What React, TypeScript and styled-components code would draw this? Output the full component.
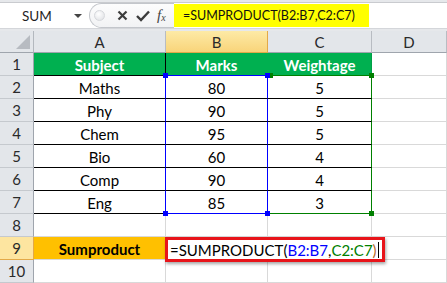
import React from 'react';
import styled, {createGlobalStyle} from 'styled-components';

const GlobalStyle = createGlobalStyle`
  html, body {
    margin: 0;
    padding: 0;
    background: #ffffff;
    overflow: hidden;
  }
  body {
    font-family: Lato, 'Liberation Sans', Arial, sans-serif;
  }
`;

const COLS = '34px 132px 102px 104px 75px';
const ROWS = '22px repeat(10, 23px)';

const BLUE = '#0000ff';
const GREEN = '#008000';

type Row = {subject: string; marks: string; weight: string};

const data: Row[] = [
  {subject: 'Maths', marks: '80', weight: '5'},
  {subject: 'Phy', marks: '90', weight: '5'},
  {subject: 'Chem', marks: '95', weight: '5'},
  {subject: 'Bio', marks: '60', weight: '4'},
  {subject: 'Comp', marks: '90', weight: '4'},
  {subject: 'Eng', marks: '85', weight: '3'},
];

const App = () => (
  <>
    <GlobalStyle />
    <Page>
      <FormulaBar>
        <Bar>
          <NameBox>
            <span>SUM</span>
            <Arrow />
          </NameBox>
          <Buttons>
            <Grip />
            <IconSlot>
              <svg width="11" height="11" viewBox="0 0 11 11">
                <path d="M1.5 1.5 L9.5 9.5 M9.5 1.5 L1.5 9.5" stroke="#3c3c3c" strokeWidth="2.2" />
              </svg>
            </IconSlot>
            <IconSlot>
              <svg width="14" height="12" viewBox="0 0 14 12">
                <path d="M1 6 L5 10 L13 1.5" stroke="#3c3c3c" strokeWidth="2.4" fill="none" />
              </svg>
            </IconSlot>
            <Fx>
              f<sub>x</sub>
            </Fx>
          </Buttons>
          <FormulaInput>=SUMPRODUCT(B2:B7,C2:C7)</FormulaInput>
        </Bar>
      </FormulaBar>

      <Sheet>
        <Grid>
          <Corner>
            <svg width="14" height="14" viewBox="0 0 14 14">
              <polygon points="14,0 14,14 0,14" fill="#b7bbc1" />
            </svg>
          </Corner>
          <ColHead>A</ColHead>
          <ColHead $selected>B</ColHead>
          <ColHead>C</ColHead>
          <ColHead>D</ColHead>

          <RowHead>1</RowHead>
          <Cell $bg="#00b050" $bold $color="#ffffff" $right="#000" $bottom="#000">
            Subject
          </Cell>
          <Cell $bg="#00b050" $bold $color="#ffffff" $right="#00b050" $bottom={BLUE}>
            Marks
          </Cell>
          <Cell $bg="#00b050" $bold $color="#ffffff" $right="#00a046" $bottom={GREEN}>
            Weightage
          </Cell>
          <Cell />

          {data.map((r, i) => {
            const last = i === data.length - 1;
            return (
              <React.Fragment key={r.subject}>
                <RowHead>{i + 2}</RowHead>
                <Cell $right={BLUE} $bottom="#000">
                  {r.subject}
                </Cell>
                <Cell $right={BLUE} $bottom={last ? BLUE : '#000'}>
                  {r.marks}
                </Cell>
                <Cell $right={GREEN} $bottom={last ? GREEN : '#000'}>
                  {r.weight}
                </Cell>
                <Cell />
              </React.Fragment>
            );
          })}

          <RowHead>8</RowHead>
          <Cell />
          <Cell />
          <Cell />
          <Cell />

          <RowHead $selected>9</RowHead>
          <Cell $bg="#ffc000" $bold $right="#ffc000">
            Sumproduct
          </Cell>
          <Cell />
          <Cell />
          <Cell />

          <RowHead>10</RowHead>
          <Cell />
          <Cell />
          <Cell />
          <Cell />
        </Grid>

        <Overlay>
          <RangeBox $col="4" $row="3 / 9">
            <Handle $color={GREEN} $x="left" $y="top" $shift={3} />
            <Handle $color={GREEN} $x="right" $y="top" />
            <Handle $color={GREEN} $x="right" $y="bottom" />
          </RangeBox>
          <RangeBox $col="3" $row="3 / 9">
            <Handle $color={BLUE} $x="left" $y="top" />
            <Handle $color={BLUE} $x="right" $y="top" />
            <Handle $color={BLUE} $x="left" $y="bottom" />
            <Handle $color={BLUE} $x="right" $y="bottom" />
          </RangeBox>
          <EditBox>
            =SUMPRODUCT(<Ref $color={BLUE}>B2:B7</Ref>,<Ref $color={GREEN}>C2:C7</Ref>
            <Ref $color="#b5651d">)</Ref>
            <Caret />
          </EditBox>
        </Overlay>
      </Sheet>
    </Page>
  </>
);

export default App;

const Page = styled.div`
  width: 447px;
  height: 283px;
  overflow: hidden;
  background: #ffffff;
`;

const FormulaBar = styled.div`
  height: 31px;
  box-sizing: border-box;
  padding-top: 2px;
  background: #e6e8eb;
`;

const Bar = styled.div`
  display: flex;
  align-items: center;
  height: 27px;
  box-sizing: border-box;
  border-top: 1px solid #c9cbcf;
  border-bottom: 1px solid #d4d6da;
  background: #ffffff;
`;

const NameBox = styled.div`
  display: flex;
  align-items: center;
  width: 89px;
  height: 100%;
  box-sizing: border-box;
  padding-left: 22px;
  font-size: 13.5px;
  color: #1f1f1f;

  span {
    flex: 1;
  }
`;

const Arrow = styled.i`
  width: 0;
  height: 0;
  margin-right: 7px;
  border-left: 4px solid transparent;
  border-right: 4px solid transparent;
  border-top: 4px solid #444;
`;

const Buttons = styled.div`
  display: flex;
  align-items: center;
  width: 85px;
  height: 100%;
  box-sizing: border-box;
  padding-left: 4px;
  border: 1px solid #c3c6cb;
  border-right: none;
  border-radius: 13px 0 0 13px;
  background: linear-gradient(#fdfdfd, #f1f2f4);
`;

const Grip = styled.span`
  width: 9px;
  height: 9px;
  margin-right: 8px;
  border-radius: 50%;
  border: 1px solid #d6d8dc;
  background: radial-gradient(circle at 40% 35%, #ffffff, #dcdee2);
`;

const IconSlot = styled.span`
  display: flex;
  align-items: center;
  justify-content: center;
  width: 19px;
  margin-right: 1px;
`;

const Fx = styled.span`
  margin-left: 4px;
  font-family: 'Liberation Serif', 'Times New Roman', serif;
  font-style: italic;
  font-size: 15px;
  color: #444;

  sub {
    font-size: 10px;
    vertical-align: -1px;
  }
`;

const FormulaInput = styled.div`
  display: flex;
  align-items: center;
  width: 195px;
  height: 23px;
  box-sizing: border-box;
  padding-left: 9px;
  background: #ffff00;
  font-size: 12.5px;
  color: #111;
`;

const Sheet = styled.div`
  display: grid;
`;

const Grid = styled.div`
  grid-area: 1 / 1;
  display: grid;
  grid-template-columns: ${COLS};
  grid-template-rows: ${ROWS};
`;

const Overlay = styled.div`
  grid-area: 1 / 1;
  position: relative;
  z-index: 1;
  display: grid;
  grid-template-columns: ${COLS};
  grid-template-rows: ${ROWS};
  pointer-events: none;
`;

const Corner = styled.div`
  display: flex;
  align-items: flex-end;
  justify-content: flex-end;
  padding: 0 3px 3px 0;
  background: #e3e6ea;
  border-right: 1px solid #b3b8be;
  border-bottom: 1px solid #9fa5ad;
`;

const ColHead = styled.div<{$selected?: boolean}>`
  display: flex;
  align-items: center;
  justify-content: center;
  box-sizing: border-box;
  font-size: 15px;
  color: #2a2a2a;
  background: ${(p) => (p.$selected ? 'linear-gradient(#fdeaa6, #f9d47a)' : '#e3e6ea')};
  border-right: 1px solid ${(p) => (p.$selected ? '#e3a948' : '#b8bcc2')};
  border-bottom: 1px solid ${(p) => (p.$selected ? '#e3a948' : '#9fa5ad')};
`;

const RowHead = styled.div<{$selected?: boolean}>`
  display: flex;
  align-items: center;
  justify-content: center;
  box-sizing: border-box;
  font-size: 15px;
  color: #2a2a2a;
  background: ${(p) => (p.$selected ? '#fde5a0' : '#e3e6ea')};
  border-right: 1px solid ${(p) => (p.$selected ? '#e3a948' : '#9fa5ad')};
  border-bottom: 1px solid ${(p) => (p.$selected ? '#e3a948' : '#c5c9ce')};
`;

const Cell = styled.div<{$bg?: string; $bold?: boolean; $color?: string; $right?: string; $bottom?: string}>`
  display: flex;
  align-items: center;
  justify-content: center;
  box-sizing: border-box;
  padding-top: 1px;
  overflow: hidden;
  white-space: nowrap;
  font-size: 15px;
  font-weight: ${(p) => (p.$bold ? 700 : 400)};
  color: ${(p) => p.$color ?? '#000'};
  background: ${(p) => p.$bg ?? '#fff'};
  border-right: 1px solid ${(p) => p.$right ?? '#d9d9d9'};
  border-bottom: 1px solid ${(p) => p.$bottom ?? '#d9d9d9'};
`;

const RangeBox = styled.div<{$col: string; $row: string}>`
  position: relative;
  grid-column: ${(p) => p.$col};
  grid-row: ${(p) => p.$row};
  margin: -1px 0 0 -1px;
`;

const Handle = styled.span<{$color: string; $x: 'left' | 'right'; $y: 'top' | 'bottom'; $shift?: number}>`
  position: absolute;
  width: 5px;
  height: 5px;
  background: ${(p) => p.$color};
  ${(p) => p.$x}: ${(p) => -2 + (p.$shift ?? 0)}px;
  ${(p) => p.$y}: -2px;
`;

const EditBox = styled.div`
  grid-column: 3 / 6;
  grid-row: 10;
  justify-self: start;
  display: flex;
  align-items: center;
  width: 220px;
  height: 25px;
  box-sizing: border-box;
  margin-left: -1px;
  padding-left: 2px;
  border: 3px solid #e8141a;
  background: #fff;
  box-shadow: 1px 2px 3px rgba(0, 0, 0, 0.35);
  font-size: 15px;
  color: #000;
  white-space: nowrap;
`;

const Ref = styled.span<{$color: string}>`
  color: ${(p) => p.$color};
`;

const Caret = styled.i`
  width: 1px;
  height: 16px;
  margin-left: 1px;
  background: #000;
`;
